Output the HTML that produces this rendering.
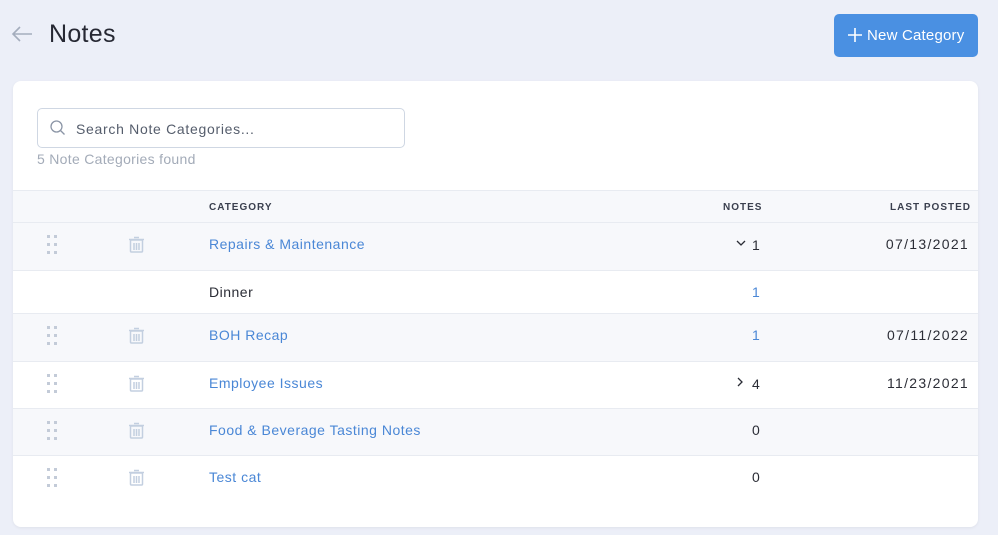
<!DOCTYPE html>
<html><head><meta charset="utf-8"><style>
*{margin:0;padding:0;box-sizing:border-box}
body{width:998px;height:535px;background:#eceff8;font-family:"Liberation Sans",sans-serif;position:relative;overflow:hidden;color:#2b2d36}
.a{position:absolute}
.card{left:13px;top:81px;width:965px;height:446px;background:#fff;border-radius:8px;box-shadow:0 1px 3px rgba(0,0,0,.06);overflow:hidden}
.row{position:absolute;left:0;width:965px;border-top:1px solid #e8ebf1}
.lt{background:#f7f8fb}
.t{position:absolute;font-size:14px;line-height:16px;letter-spacing:0.5px}
.dt{position:absolute;font-size:14px;line-height:16px;letter-spacing:1.3px;right:9px}
.blue{color:#4a87d6}
.hd{font-size:10px;letter-spacing:1px;font-weight:bold;color:#3a3f4e;position:absolute;top:11px}
</style></head><body>
<svg class="a" style="left:11px;top:26px" width="22" height="16" viewBox="0 0 22 16"><path d="M21 8H2M9 1L2 8l7 7" fill="none" stroke="#a4adbd" stroke-width="1.6"/></svg>
<div class="a" style="left:49px;top:20px;font-size:25px;color:#262833;letter-spacing:0.3px">Notes</div>
<div class="a" style="left:834px;top:14px;width:144px;height:43px;background:#4a90e2;border-radius:5px;color:#fff;font-size:15px;line-height:43px;padding-left:33px;letter-spacing:0.2px">New Category</div>
<svg class="a" style="left:847px;top:27px" width="16" height="16"><path d="M8 1v14M1 8h14" stroke="#fff" stroke-width="1.6"/></svg>
<div class="a card">
  <div class="a" style="left:24px;top:27px;width:368px;height:40px;border:1px solid #cfd7e3;border-radius:5px"></div>
  <svg class="a" style="left:37px;top:39px" width="16" height="16"><circle cx="6.5" cy="6.5" r="5.5" fill="none" stroke="#8b95a6" stroke-width="1.3"/><path d="M10.5 10.5l4 4" stroke="#8b95a6" stroke-width="1.3"/></svg>
  <div class="t" style="left:63px;top:40px;color:#555d6c;letter-spacing:0.7px">Search Note Categories...</div>
  <div class="t" style="left:24px;top:70px;color:#a3abb8;letter-spacing:0.3px">5 Note Categories found</div>
  <div class="row lt" style="top:109px;height:32px"><div class="hd" style="left:196px">CATEGORY</div><div class="hd" style="left:710px">NOTES</div><div class="hd" style="left:877px">LAST POSTED</div></div>
  <div class="row lt" style="top:141px;height:48px"></div>
  <div class="row" style="top:189px;height:43px"></div>
  <div class="row lt" style="top:232px;height:48px"></div>
  <div class="row" style="top:280px;height:47px"></div>
  <div class="row lt" style="top:327px;height:47px"></div>
  <div class="row" style="top:374px;height:47px"></div>
  <svg width="0" height="0" style="position:absolute"><defs>
    <g id="d" fill="#c3cbd8"><rect x="0" y="0" width="3" height="3"/><rect x="7" y="0" width="3" height="3"/><rect x="0" y="8" width="3" height="3"/><rect x="7" y="8" width="3" height="3"/><rect x="0" y="16" width="3" height="3"/><rect x="7" y="16" width="3" height="3"/></g>
    <g id="tr" fill="none" stroke="#c3cfe0" stroke-width="1.5"><path d="M6 2.5h5M1 4.5h15"/><rect x="2.5" y="5" width="12" height="12" rx="1"/><path d="M6 8v7M8.5 8v7M11 8v7"/></g>
  </defs></svg>
  <svg class="a" style="left:34px;top:154px" width="10" height="19"><use href="#d"/></svg>
  <svg class="a" style="left:115px;top:154px" width="18" height="19"><use href="#tr"/></svg>
  <svg class="a" style="left:34px;top:245px" width="10" height="19"><use href="#d"/></svg>
  <svg class="a" style="left:115px;top:245px" width="18" height="19"><use href="#tr"/></svg>
  <svg class="a" style="left:34px;top:293px" width="10" height="19"><use href="#d"/></svg>
  <svg class="a" style="left:115px;top:293px" width="18" height="19"><use href="#tr"/></svg>
  <svg class="a" style="left:34px;top:340px" width="10" height="19"><use href="#d"/></svg>
  <svg class="a" style="left:115px;top:340px" width="18" height="19"><use href="#tr"/></svg>
  <svg class="a" style="left:34px;top:387px" width="10" height="19"><use href="#d"/></svg>
  <svg class="a" style="left:115px;top:387px" width="18" height="19"><use href="#tr"/></svg>
  <div class="t blue" style="left:196px;top:155px">Repairs &amp; Maintenance</div>
  <svg class="a" style="left:723px;top:159px" width="10" height="7"><path d="M1 1l4 4 4-4" fill="none" stroke="#2b2d36" stroke-width="1.3"/></svg>
  <div class="t" style="left:739px;top:156px">1</div>
  <div class="dt" style="top:155px">07/13/2021</div>
  <div class="t" style="left:196px;top:203px">Dinner</div>
  <div class="t blue" style="left:739px;top:203px">1</div>
  <div class="t blue" style="left:196px;top:246px">BOH Recap</div>
  <div class="t blue" style="left:739px;top:246px">1</div>
  <div class="dt" style="top:246px">07/11/2022</div>
  <div class="t blue" style="left:196px;top:294px">Employee Issues</div>
  <svg class="a" style="left:724px;top:296px" width="7" height="10"><path d="M1 1l4 4-4 4" fill="none" stroke="#2b2d36" stroke-width="1.3"/></svg>
  <div class="t" style="left:739px;top:295px">4</div>
  <div class="dt" style="top:294px">11/23/2021</div>
  <div class="t blue" style="left:196px;top:341px">Food &amp; Beverage Tasting Notes</div>
  <div class="t" style="left:739px;top:341px">0</div>
  <div class="t blue" style="left:196px;top:388px">Test cat</div>
  <div class="t" style="left:739px;top:388px">0</div>
</div>
</body></html>
